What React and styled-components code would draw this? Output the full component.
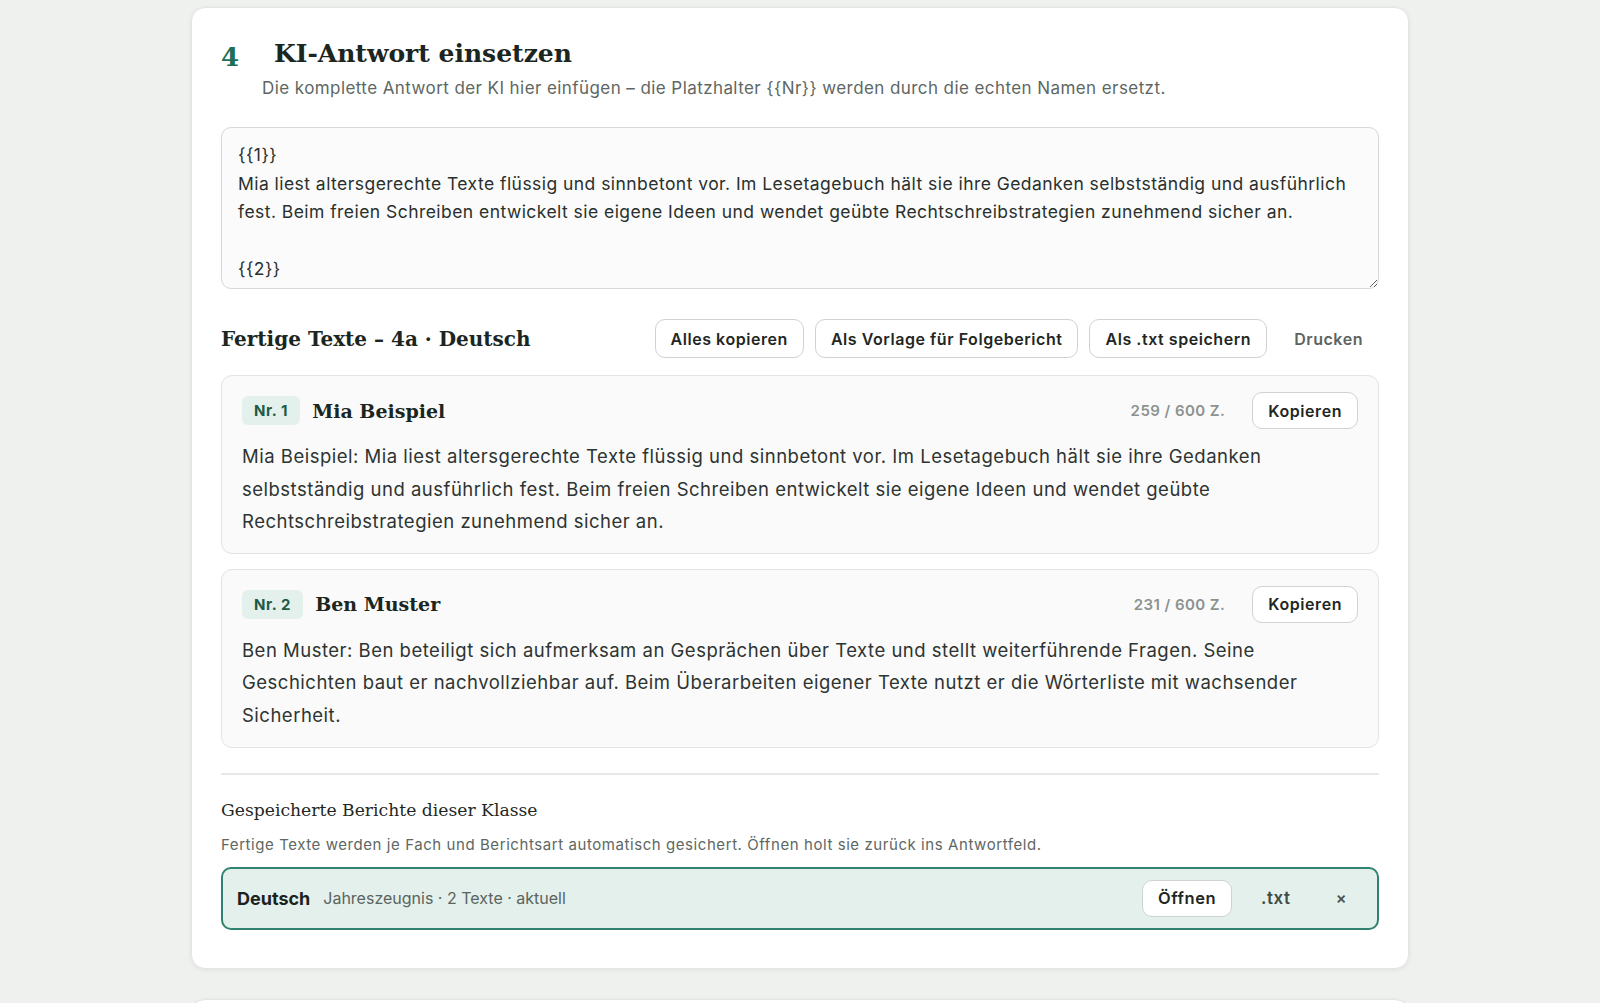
import React from "react";
import styled, { createGlobalStyle } from "styled-components";

const Global = createGlobalStyle`
  html, body { margin: 0; padding: 0; background: #eff1ef; }
  body { font-family: Inter, "Noto Sans", "Liberation Sans", sans-serif; color: #1f2724; }
  * { box-sizing: border-box; }
`;

const serif = `"DejaVu Serif", "Liberation Serif", Georgia, serif`;
const sans = `Inter, "Noto Sans", "Liberation Sans", sans-serif`;

const Page = styled.div`
  display: flex;
  flex-direction: column;
  align-items: center;
  gap: 30px;
  padding-top: 7px;
  padding-bottom: 40px;
`;

const Card = styled.section`
  width: 1218px;
  background: #ffffff;
  border: 1px solid #e2e6e3;
  border-radius: 14px;
  box-shadow: 0 1px 4px rgba(30, 45, 40, 0.07);
  padding: 28px 29px 38px;
`;

const StepHeader = styled.div`
  display: flex;
  align-items: baseline;
`;

const StepNum = styled.span`
  width: 53px;
  font-family: ${serif};
  font-weight: 700;
  font-size: 26px;
  color: #1f6f58;
  line-height: 34px;
  position: relative;
  top: 4px;
`;

const StepTitle = styled.h1`
  margin: 0;
  font-family: ${serif};
  font-weight: 700;
  font-size: 25px;
  line-height: 34px;
  color: #1b2621;
`;

const StepSub = styled.p`
  margin: 5px 0 0 41px;
  font-size: 17px;
  letter-spacing: 0.42px;
  line-height: 24px;
  color: #5e6763;
`;

const Answer = styled.textarea`
  display: block;
  width: 100%;
  height: 162px;
  margin-top: 27px;
  padding: 13px 16px;
  border: 1px solid #d3d9d6;
  border-radius: 10px;
  background: #fbfbfb;
  font-family: ${sans};
  font-size: 17.5px;
  letter-spacing: 0.45px;
  line-height: 28.6px;
  color: #29302d;
  resize: vertical;
  overflow: hidden;
  outline: none;
`;

const Toolbar = styled.div`
  display: flex;
  align-items: center;
  gap: 11px;
  margin-top: 30px;
`;

const SectionTitle = styled.h2`
  margin: 0;
  margin-right: auto;
  font-family: ${serif};
  font-weight: 700;
  font-size: 20px;
  line-height: 28px;
  color: #1b2621;
`;

const Button = styled.button`
  height: ${(p) => (p.$small ? "37px" : "39px")};
  padding: 0 15px;
  border: 1px solid ${(p) => (p.$ghost ? "transparent" : "#cdd4d1")};
  border-radius: 10px;
  background: ${(p) => (p.$ghost ? "transparent" : "#ffffff")};
  font-family: ${sans};
  font-size: ${(p) => p.$size || "16px"};
  font-weight: 600;
  letter-spacing: 0.55px;
  color: ${(p) => (p.$ghost ? p.$tone || "#5b6460" : "#1f2724")};
  cursor: pointer;
  white-space: nowrap;
`;

const List = styled.div`
  display: flex;
  flex-direction: column;
  gap: 15px;
  margin-top: 17px;
`;

const Entry = styled.article`
  background: #fafafa;
  border: 1px solid #e0e4e2;
  border-radius: 11px;
  padding: 16px 20px 15px;
`;

const EntryHead = styled.div`
  display: flex;
  align-items: center;
  height: 37px;
`;

const Badge = styled.span`
  display: inline-flex;
  align-items: center;
  height: 29px;
  padding: 0 12px;
  border-radius: 6px;
  background: #e3f0eb;
  color: #1d5a47;
  font-size: 15px;
  font-weight: 700;
  letter-spacing: 0.6px;
`;

const Name = styled.h3`
  margin: 0 0 0 12px;
  font-family: ${serif};
  font-weight: 700;
  font-size: 19px;
  color: #1b2621;
`;

const Count = styled.span`
  margin-left: auto;
  margin-right: 27px;
  font-size: 15px;
  font-weight: 600;
  letter-spacing: 0.45px;
  color: #8c9290;
`;

const EntryText = styled.p`
  margin: 11px 0 0;
  font-size: 18.5px;
  letter-spacing: 0.5px;
  line-height: 32.6px;
  color: #2d3431;
`;

const Divider = styled.hr`
  margin: 25px 0 0;
  border: 0;
  border-top: 2px solid #e6e9e7;
`;

const SavedTitle = styled.h4`
  margin: 22px 0 0;
  font-family: ${serif};
  font-weight: 400;
  font-size: 17.2px;
  line-height: 26px;
  color: #1f2724;
`;

const SavedHint = styled.p`
  margin: 11px 0 0;
  font-size: 15px;
  letter-spacing: 0.57px;
  line-height: 22px;
  color: #5e6763;
`;

const SavedRow = styled.div`
  display: flex;
  align-items: center;
  gap: 13px;
  margin-top: 11px;
  height: 63px;
  padding: 0 14px;
  border: 2px solid #2f8370;
  border-radius: 10px;
  background: #e4f0eb;
`;

const Subject = styled.strong`
  font-size: 18px;
  font-weight: 700;
  color: #1b2320;
`;

const Meta = styled.span`
  margin-right: auto;
  font-size: 16px;
  color: #5a6460;
`;

const entries = [
  {
    nr: 1,
    name: "Mia Beispiel",
    count: "259 / 600 Z.",
    text:
      "Mia Beispiel: Mia liest altersgerechte Texte flüssig und sinnbetont vor. Im Lesetagebuch hält sie ihre Gedanken selbstständig und ausführlich fest. Beim freien Schreiben entwickelt sie eigene Ideen und wendet geübte Rechtschreibstrategien zunehmend sicher an.",
  },
  {
    nr: 2,
    name: "Ben Muster",
    count: "231 / 600 Z.",
    text:
      "Ben Muster: Ben beteiligt sich aufmerksam an Gesprächen über Texte und stellt weiterführende Fragen. Seine Geschichten baut er nachvollziehbar auf. Beim Überarbeiten eigener Texte nutzt er die Wörterliste mit wachsender Sicherheit.",
  },
];

const answer = `{{1}}
Mia liest altersgerechte Texte flüssig und sinnbetont vor. Im Lesetagebuch hält sie ihre Gedanken selbstständig und ausführlich fest. Beim freien Schreiben entwickelt sie eigene Ideen und wendet geübte Rechtschreibstrategien zunehmend sicher an.

{{2}}
Ben beteiligt sich aufmerksam an Gesprächen über Texte und stellt weiterführende Fragen. Seine Geschichten baut er nachvollziehbar auf. Beim Überarbeiten eigener Texte nutzt er die Wörterliste mit wachsender Sicherheit.`;

export default function App() {
  return (
    <>
      <Global />
      <Page>
        <Card>
          <StepHeader>
            <StepNum>4</StepNum>
            <StepTitle>KI-Antwort einsetzen</StepTitle>
          </StepHeader>
          <StepSub>
            Die komplette Antwort der KI hier einfügen – die Platzhalter {"{{Nr}}"} werden durch die echten Namen ersetzt.
          </StepSub>
          <Answer defaultValue={answer} spellCheck={false} />

          <Toolbar>
            <SectionTitle>Fertige Texte – 4a · Deutsch</SectionTitle>
            <Button>Alles kopieren</Button>
            <Button>Als Vorlage für Folgebericht</Button>
            <Button>Als .txt speichern</Button>
            <Button $ghost>Drucken</Button>
          </Toolbar>

          <List>
            {entries.map((e) => (
              <Entry key={e.nr}>
                <EntryHead>
                  <Badge>Nr. {e.nr}</Badge>
                  <Name>{e.name}</Name>
                  <Count>{e.count}</Count>
                  <Button $small>Kopieren</Button>
                </EntryHead>
                <EntryText>{e.text}</EntryText>
              </Entry>
            ))}
          </List>

          <Divider />
          <SavedTitle>Gespeicherte Berichte dieser Klasse</SavedTitle>
          <SavedHint>
            Fertige Texte werden je Fach und Berichtsart automatisch gesichert. Öffnen holt sie zurück ins Antwortfeld.
          </SavedHint>
          <SavedRow>
            <Subject>Deutsch</Subject>
            <Meta>Jahreszeugnis · 2 Texte · aktuell</Meta>
            <Button $small $size="16.5px">Öffnen</Button>
            <Button $small $ghost $size="17px" $tone="#3f4b46">.txt</Button>
            <Button $small $ghost $tone="#4a5350">×</Button>
          </SavedRow>
        </Card>
        <Card />
      </Page>
    </>
  );
}
